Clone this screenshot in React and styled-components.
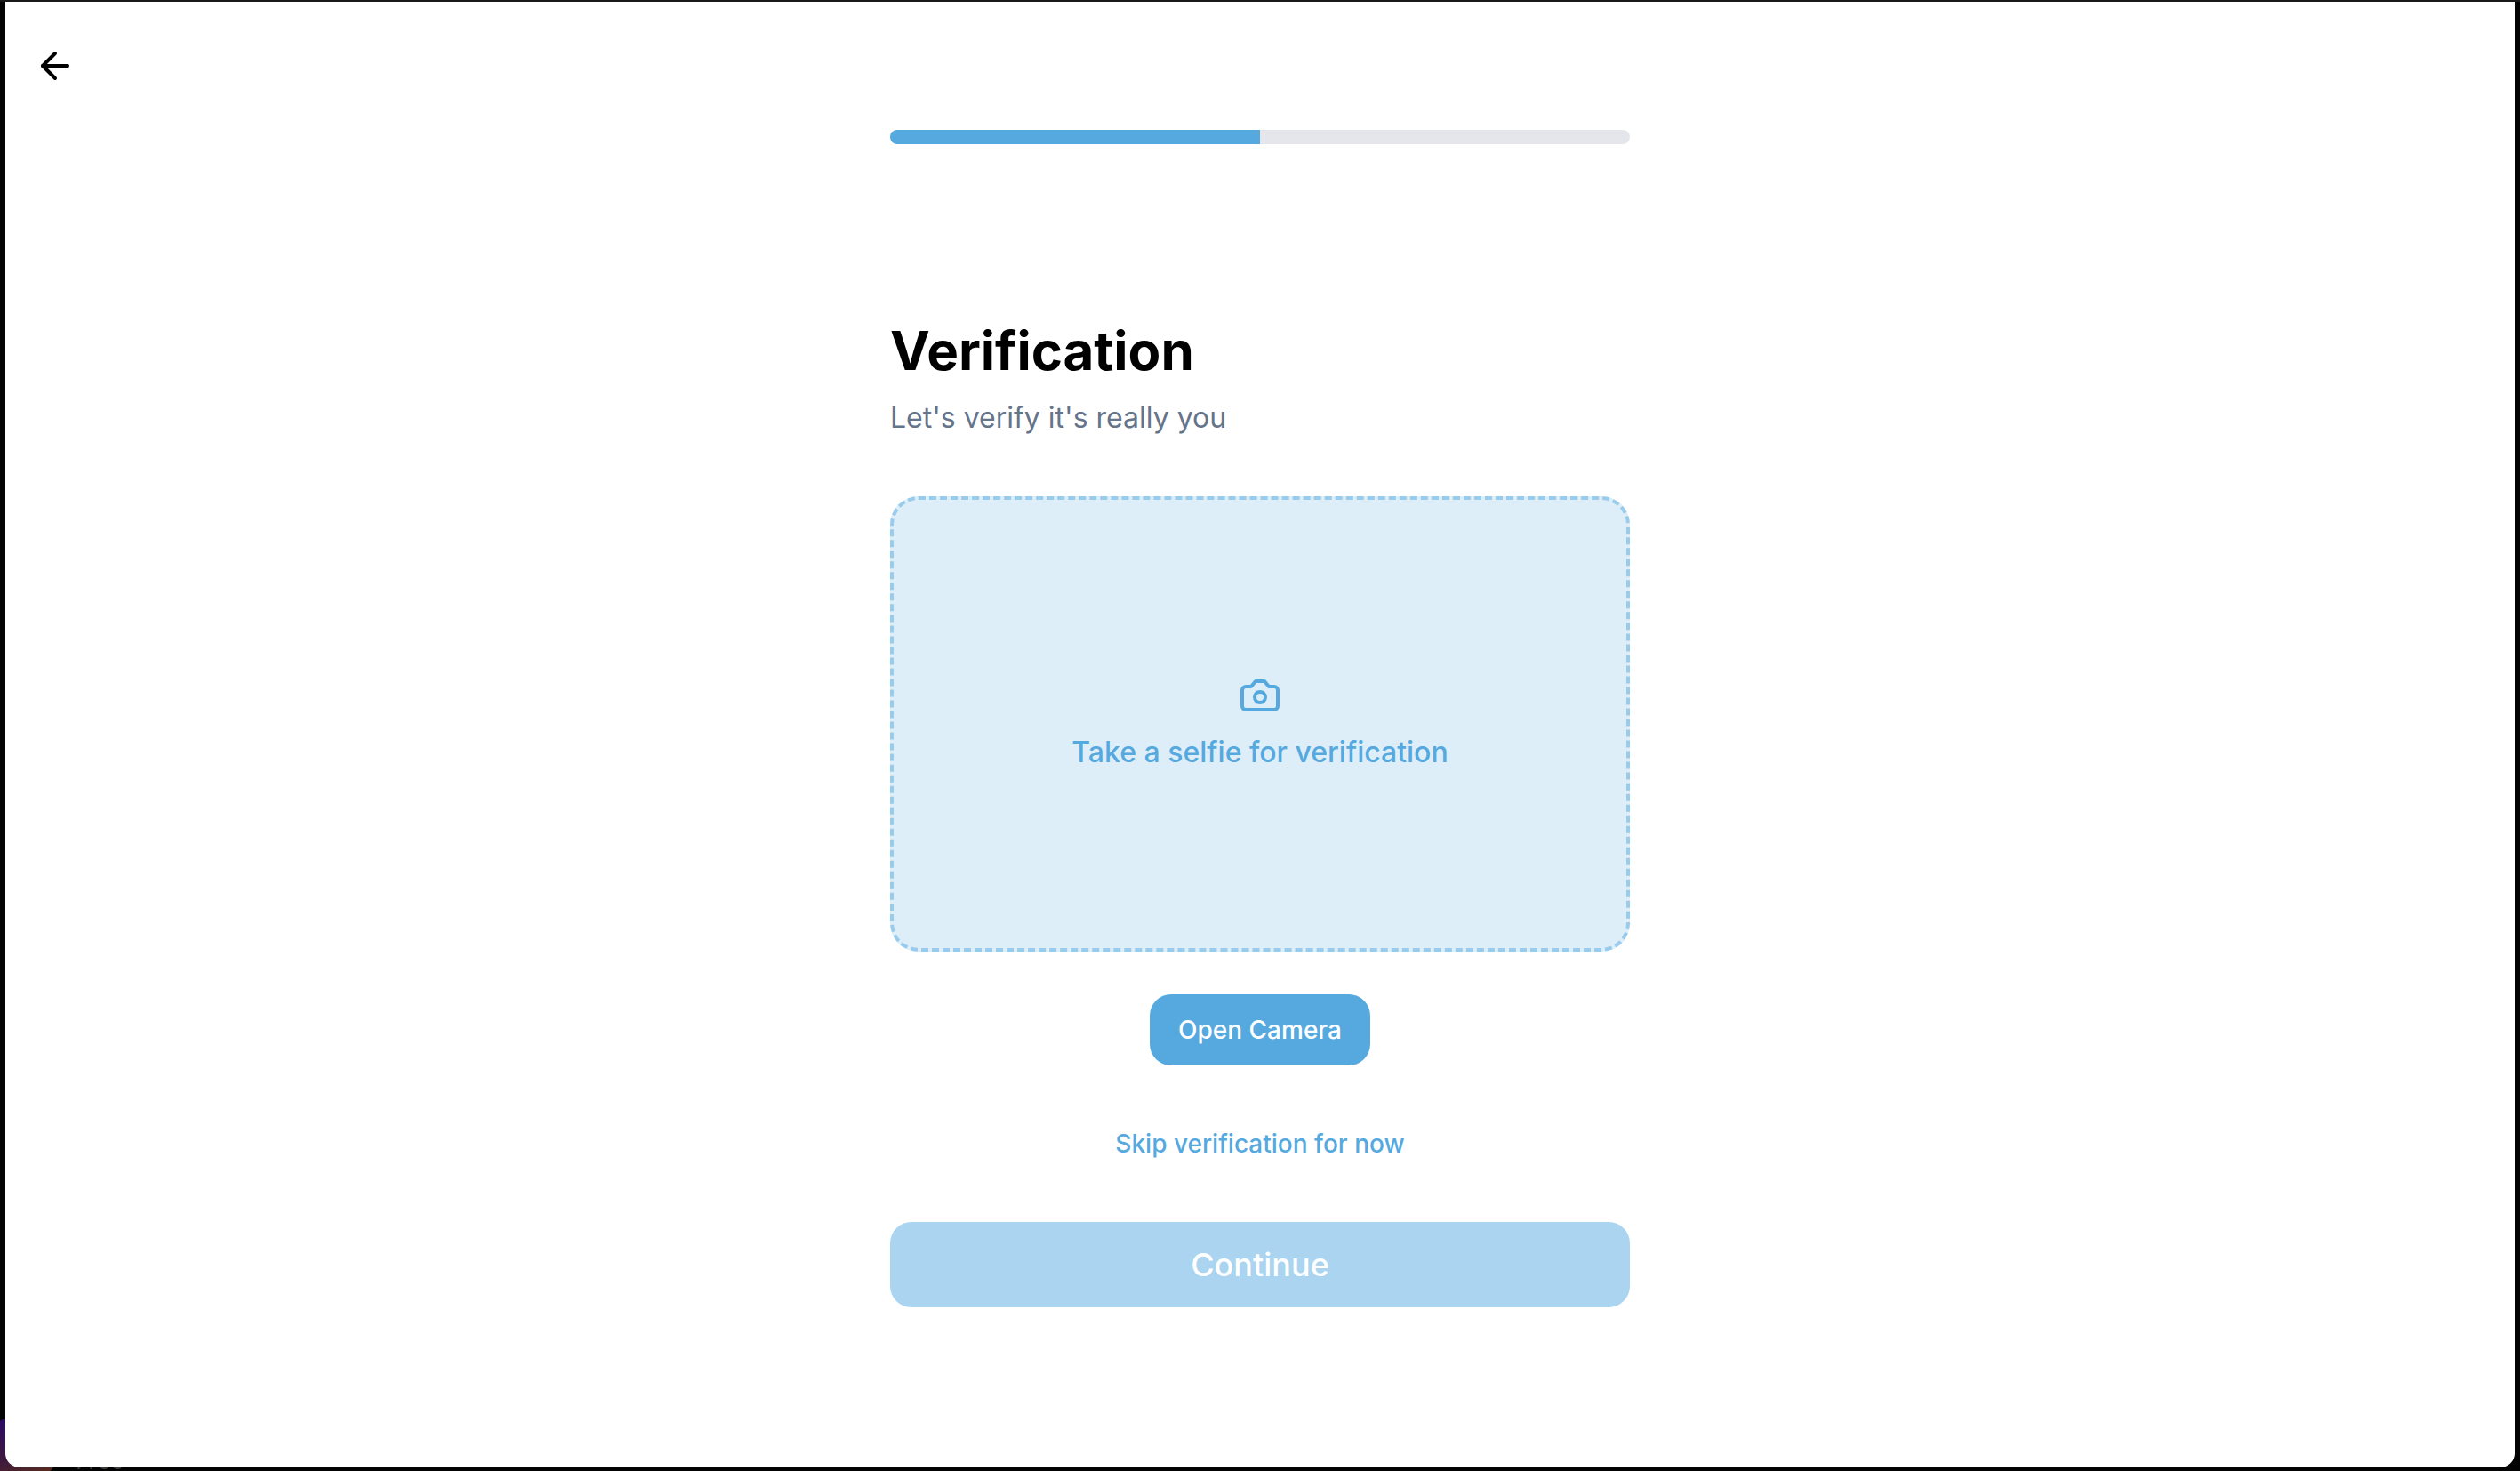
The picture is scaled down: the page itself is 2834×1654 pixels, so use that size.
import React from "react";
import styled, { createGlobalStyle } from "styled-components";
import { ArrowLeft } from "lucide-react";

const primary = "#55a9df";

const GlobalStyle = createGlobalStyle`
  *, *::before, *::after { box-sizing: border-box; }
  body {
    margin: 0;
    background: #030303;
    font-family: Inter, "Liberation Sans", sans-serif;
  }
  h1, p { margin: 0; }
  button { font-family: inherit; border: 0; cursor: pointer; }
`;

const Desktop = styled.div`
  position: relative;
  display: flex;
  min-height: 100vh;
  padding: 2px 6px 4px;
  overflow: hidden;
  background: #030303;
  box-shadow: inset 0 2px #1b191a;
`;

const DockIcon = styled.div`
  position: absolute;
  left: -8px;
  bottom: -4px;
  width: 72px;
  height: 64px;
  border-radius: 20px;
  background: linear-gradient(160deg, #2c0c60 10%, #3f1a3c 60%, #5c3018 100%);
`;

const DockLabel = styled.span`
  position: absolute;
  left: 85px;
  bottom: 0;
  font-size: 26px;
  line-height: 22px;
  color: #3c3c3c;
`;

const Window = styled.div`
  position: relative;
  flex: 1;
  display: flex;
  flex-direction: column;
  padding: 32px 16px;
  background: #fff;
  border-radius: 0 0 16px 16px;
`;

const BackButton = styled.button`
  display: grid;
  place-items: center;
  width: 80px;
  height: 80px;
  padding: 0;
  background: transparent;
  color: #000;
`;

const Content = styled.main`
  display: flex;
  flex-direction: column;
  width: 100%;
  max-width: 832px;
  margin: 32px auto 0;
`;

const Progress = styled.div`
  height: 16px;
  border-radius: 8px;
  background: #e5e6eb;
  overflow: hidden;
`;

const ProgressFill = styled.div`
  height: 100%;
  background: ${primary};
`;

const Heading = styled.header`
  display: flex;
  flex-direction: column;
  gap: 16px;
  margin: 196px 0 64px;
`;

const Title = styled.h1`
  font-size: 60px;
  line-height: 72px;
  font-weight: 700;
  color: #000;
`;

const Subtitle = styled.p`
  font-size: 32px;
  line-height: 48px;
  color: #64748b;
`;

const SelfieArea = styled.section`
  display: flex;
  flex-direction: column;
  align-items: center;
  justify-content: center;
  gap: 16px;
  height: 512px;
  border: 4px dashed #98cbec;
  border-radius: 32px;
  background: #ddeef8;
  color: ${primary};
`;

const SelfieText = styled.p`
  font-size: 32px;
  line-height: 48px;
  font-weight: 500;
`;

const Actions = styled.div`
  display: flex;
  flex-direction: column;
  align-items: center;
  gap: 48px;
  margin-top: 48px;
`;

const Button = styled.button`
  height: 80px;
  padding: 0 32px;
  border-radius: 24px;
  font-size: 28px;
  font-weight: 500;
  background: ${(p) => (p.$plain ? "transparent" : primary)};
  color: ${(p) => (p.$plain ? primary : "#fff")};
`;

const ContinueButton = styled(Button)`
  width: 100%;
  height: 96px;
  font-size: 36px;
  &:disabled { background: #aad4ef; cursor: default; }
`;

function CameraIcon() {
  return (
    <svg width="48" height="48" viewBox="0 0 24 24" fill="none" stroke="currentColor" strokeWidth="2" strokeLinecap="round" strokeLinejoin="round" aria-hidden="true">
      <path d="M14.5 4h-5L7 7H4a2 2 0 0 0-2 2v9a2 2 0 0 0 2 2h16a2 2 0 0 0 2-2V9a2 2 0 0 0-2-2h-3l-2.5-3z" />
      <circle cx="12" cy="13" r="3" />
    </svg>
  );
}

export default function App() {
  const progress = 50;
  return (
    <>
      <GlobalStyle />
      <Desktop>
        <DockIcon />
        <DockLabel>Free</DockLabel>
        <Window>
          <BackButton type="button" aria-label="Back">
            <ArrowLeft size={48} />
          </BackButton>
          <Content>
            <Progress role="progressbar" aria-label="Sign-up progress" aria-valuenow={progress} aria-valuemin={0} aria-valuemax={100}>
              <ProgressFill style={{ width: `${progress}%` }} />
            </Progress>
            <Heading>
              <Title>Verification</Title>
              <Subtitle>Let's verify it's really you</Subtitle>
            </Heading>
            <SelfieArea>
              <CameraIcon />
              <SelfieText>Take a selfie for verification</SelfieText>
            </SelfieArea>
            <Actions>
              <Button type="button">Open Camera</Button>
              <Button type="button" $plain>Skip verification for now</Button>
              <ContinueButton type="button" disabled>Continue</ContinueButton>
            </Actions>
          </Content>
        </Window>
      </Desktop>
    </>
  );
}
